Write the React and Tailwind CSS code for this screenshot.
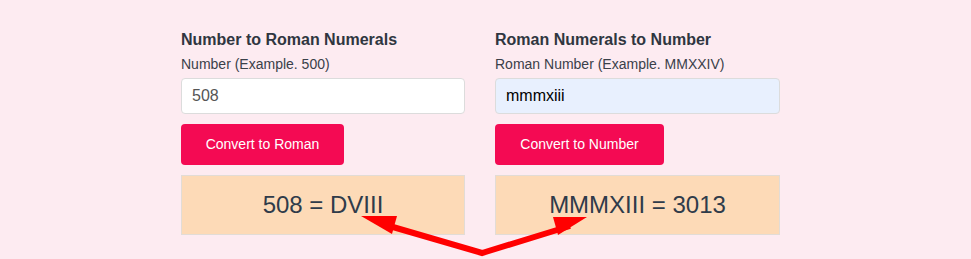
export default function App() {
  return (
    <div className="relative w-[971px] h-[259px] overflow-hidden bg-[#fdebf1]" style={{ fontFamily: '"Liberation Sans", Arial, sans-serif' }}>
      <div className="flex gap-[30px] pl-[181px] pt-[30px]">
        <div className="w-[284px] flex flex-col">
          <div className="text-[16px] leading-[20px] font-bold text-[#2f3640]">Number to Roman Numerals</div>
          <div className="mt-[4px] text-[14px] leading-[20px] text-[#3a4049]">Number (Example. 500)</div>
          <div className="mt-[4px] h-[36px] bg-white border border-[#dcdcdc] rounded-[4px] pl-[10px] flex items-center text-[16px] text-[#555]">508</div>
          <div className="mt-[10px] h-[41px] w-[163px] bg-[#f40a53] rounded-[4px] flex items-center justify-center text-white text-[14px]">Convert to Roman</div>
          <div className="mt-[10px] h-[60px] bg-[#fddab7] border border-[#e2dcd6] flex items-center justify-center text-[24px] text-[#2f3b4a]">508 = DVIII</div>
        </div>
        <div className="w-[285px] flex flex-col">
          <div className="text-[16px] leading-[20px] font-bold text-[#2f3640]">Roman Numerals to Number</div>
          <div className="mt-[4px] text-[14px] leading-[20px] text-[#3a4049]">Roman Number (Example. MMXXIV)</div>
          <div className="mt-[4px] h-[36px] bg-[#e8f0fe] border border-[#dcdcdc] rounded-[4px] pl-[10px] flex items-center text-[16px] text-black">mmmxiii</div>
          <div className="mt-[10px] h-[41px] w-[169px] bg-[#f40a53] rounded-[4px] flex items-center justify-center text-white text-[14px]">Convert to Number</div>
          <div className="mt-[10px] h-[60px] bg-[#fddab7] border border-[#e2dcd6] flex items-center justify-center text-[24px] text-[#2f3b4a]">MMMXIII = 3013</div>
        </div>
      </div>
      <svg className="absolute left-0 top-0" width="971" height="259" viewBox="0 0 971 259">
        <polyline points="386,225 482,253 570,226" fill="none" stroke="#ff0000" strokeWidth="6" strokeLinejoin="miter" />
        <polygon points="361,216 397,216 392,234" fill="#ff0000" />
        <polygon points="587,217 553,217 558,235" fill="#ff0000" />
      </svg>
    </div>
  );
}
